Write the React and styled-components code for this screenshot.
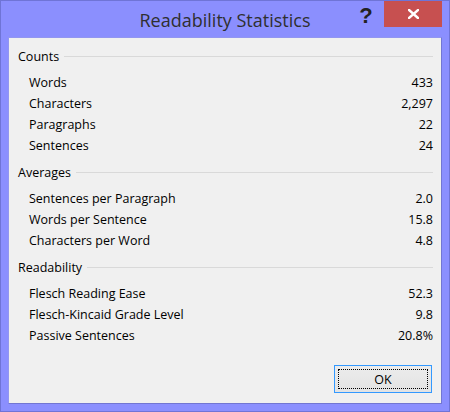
import React from "react";
import styled, { createGlobalStyle } from "styled-components";

const Global = createGlobalStyle`
  html, body { margin: 0; padding: 0; width: 450px; height: 412px; overflow: hidden; }
  body { font-family: "Open Sans", "Noto Sans", sans-serif; }
  * { box-sizing: border-box; }
`;

const Window = styled.div`
  width: 450px;
  height: 412px;
  border: 1px solid #6f74d6;
  background: #8b8ffe;
  display: flex;
  flex-direction: column;
`;

const TitleBar = styled.div`
  height: 36px;
  flex: none;
  display: grid;
  grid-template-columns: 1fr auto 1fr;
  align-items: start;
`;

const Title = styled.div`
  grid-column: 2;
  font-family: "Open Sans", "Noto Sans", sans-serif;
  font-size: 18px;
  line-height: 36px;
  color: #2f2f2f;
  white-space: nowrap;
  padding-top: 1px;
`;

const Controls = styled.div`
  grid-column: 3;
  justify-self: end;
  display: flex;
  align-items: flex-start;
  margin-right: 7px;
`;

const HelpButton = styled.div`
  width: 34px;
  height: 26px;
  display: flex;
  align-items: center;
  justify-content: center;
  font-family: "Liberation Sans", Arial, sans-serif;
  font-weight: bold;
  font-size: 22px;
  line-height: 1;
  color: #222;
  padding-top: 3px;
  padding-right: 2px;
`;

const CloseButton = styled.div`
  width: 58px;
  height: 26px;
  background: #c75050;
  display: flex;
  align-items: center;
  justify-content: center;
`;

const Content = styled.div`
  flex: 1;
  margin: 0 7px 7px 7px;
  background: #f0f0f0;
  border-right: 1px solid #7276d2;
  border-bottom: 1px solid #7276d2;
  border-top: 1px solid #9296f0;
  border-left: 1px solid #9296f0;
  display: flex;
  flex-direction: column;
  padding: 8px 8px 10px 9px;
  font-size: 12.5px;
  color: #000;
`;

const Section = styled.section`
  margin-top: ${(p) => (p.$first ? "0" : "6px")};
`;

const Header = styled.div`
  display: flex;
  align-items: center;
  height: 21px;
  margin-bottom: 5px;
  &::after {
    content: "";
    flex: 1;
    height: 1px;
    background: #d9d9d9;
    margin-left: 5px;
  }
`;

const Row = styled.div`
  display: flex;
  justify-content: space-between;
  align-items: center;
  height: 21px;
  padding-left: 11px;
`;

const Footer = styled.div`
  margin-top: auto;
  display: flex;
  justify-content: flex-end;
  padding-right: 1px;
`;

const OkButton = styled.button`
  width: 98px;
  height: 28px;
  border: 1px solid #3399ff;
  background: linear-gradient(#ececec, #e3e3e3);
  padding: 3px;
  font-family: "Open Sans", "Noto Sans", sans-serif;
  font-size: 12.5px;
  color: #000;
  display: flex;
  cursor: default;
`;

const Focus = styled.span`
  flex: 1;
  border: 1px dotted #000;
  display: flex;
  align-items: center;
  justify-content: center;
`;

const data = [
  {
    title: "Counts",
    rows: [
      ["Words", "433"],
      ["Characters", "2,297"],
      ["Paragraphs", "22"],
      ["Sentences", "24"],
    ],
  },
  {
    title: "Averages",
    rows: [
      ["Sentences per Paragraph", "2.0"],
      ["Words per Sentence", "15.8"],
      ["Characters per Word", "4.8"],
    ],
  },
  {
    title: "Readability",
    rows: [
      ["Flesch Reading Ease", "52.3"],
      ["Flesch-Kincaid Grade Level", "9.8"],
      ["Passive Sentences", "20.8%"],
    ],
  },
];

export default function App() {
  return (
    <>
      <Global />
      <Window>
        <TitleBar>
          <Title>Readability Statistics</Title>
          <Controls>
            <HelpButton>?</HelpButton>
            <CloseButton>
              <svg width="11" height="10" viewBox="0 0 11 10">
                <path d="M1 1 L10 9 M10 1 L1 9" stroke="#fff" strokeWidth="2.4" strokeLinecap="square" fill="none" />
              </svg>
            </CloseButton>
          </Controls>
        </TitleBar>
        <Content>
          {data.map((s, i) => (
            <Section key={s.title} $first={i === 0}>
              <Header>{s.title}</Header>
              {s.rows.map(([k, v]) => (
                <Row key={k}>
                  <span>{k}</span>
                  <span>{v}</span>
                </Row>
              ))}
            </Section>
          ))}
          <Footer>
            <OkButton>
              <Focus>OK</Focus>
            </OkButton>
          </Footer>
        </Content>
      </Window>
    </>
  );
}
